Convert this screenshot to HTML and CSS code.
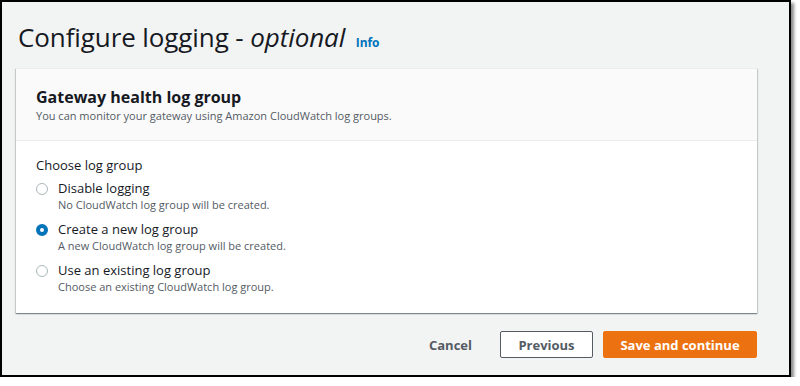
FILE: index.html
```html
<!DOCTYPE html>
<html lang="en">
<head>
    <meta charset="UTF-8">
    <title>Configure logging</title>
    <link rel="stylesheet" href="styles.css">
</head>
<body>
    <div class="frame">
        <h1 class="page-title">Configure logging - <i>optional</i> <a class="info" href="#">Info</a></h1>

        <div class="card">
            <div class="card-header">
                <h2>Gateway health log group</h2>
                <p>You can monitor your gateway using Amazon CloudWatch log groups.</p>
            </div>
            <div class="card-body">
                <div class="group-label">Choose log group</div>
                <label class="radio">
                    <span class="dot"></span>
                    <span class="text">
                        <span class="title">Disable logging</span>
                        <span class="desc">No CloudWatch log group will be created.</span>
                    </span>
                </label>
                <label class="radio checked">
                    <span class="dot"></span>
                    <span class="text">
                        <span class="title">Create a new log group</span>
                        <span class="desc">A new CloudWatch log group will be created.</span>
                    </span>
                </label>
                <label class="radio">
                    <span class="dot"></span>
                    <span class="text">
                        <span class="title">Use an existing log group</span>
                        <span class="desc">Choose an existing CloudWatch log group.</span>
                    </span>
                </label>
            </div>
        </div>

        <div class="actions">
            <button class="btn-link">Cancel</button>
            <button class="btn-normal">Previous</button>
            <button class="btn-primary">Save and continue</button>
        </div>
    </div>
</body>
</html>
```

FILE: styles.css
```css
body {
    margin: 0;
    font-family: "Open Sans", "Noto Sans", sans-serif;
    background-color: #ffffff;
    color: #16191f;
}

.frame {
    box-sizing: border-box;
    width: 791px;
    height: 377px;
    border: 2px solid #000000;
    background-color: #f2f3f3;
    box-shadow: 3px 3px 3px rgba(0, 0, 0, 0.45);
    padding: 0 32px 0 14px;
}

.page-title {
    margin: 0;
    padding-top: 18px;
    height: 66px;
    box-sizing: border-box;
    font-size: 26px;
    font-weight: 400;
    line-height: 34px;
    letter-spacing: -0.1px;
    padding-left: 2px;
}

.info {
    font-size: 12px;
    font-weight: 700;
    color: #0073bb;
    text-decoration: none;
    margin-left: 4px;
}

.card {
    background-color: #ffffff;
    box-shadow: 0 1px 1px rgba(0, 28, 36, 0.3), 1px 1px 1px rgba(0, 28, 36, 0.15), -1px 1px 1px rgba(0, 28, 36, 0.15);
    border-top: 1px solid #eaeded;
}

.card-header {
    background-color: #fafafa;
    border-bottom: 1px solid #eaeded;
    padding: 17px 20px 14px;
    height: 72px;
    box-sizing: border-box;
}

.card-header h2 {
    margin: 0;
    font-size: 16px;
    font-weight: 700;
    line-height: 22px;
}

.card-header p {
    margin: 0;
    font-size: 11px;
    line-height: 16px;
    color: #545b64;
}

.card-body {
    padding: 15px 20px 11px;
}

.group-label {
    font-size: 13px;
    line-height: 18px;
    margin-bottom: 5px;
}

.radio {
    display: flex;
    gap: 10px;
    margin-bottom: 8px;
}

.dot {
    box-sizing: border-box;
    width: 12px;
    height: 12px;
    margin-top: 4px;
    border: 1px solid #aab7b8;
    border-radius: 50%;
    background-color: #ffffff;
}

.radio.checked .dot {
    border: 4px solid #0073bb;
}

.text {
    display: flex;
    flex-direction: column;
}

.title {
    font-size: 13px;
    line-height: 18px;
}

.desc {
    font-size: 11px;
    line-height: 15px;
    color: #545b64;
}

.actions {
    display: flex;
    justify-content: flex-end;
    align-items: center;
    gap: 10px;
    margin-top: 18px;
}

.actions button {
    font-family: inherit;
    font-size: 13px;
    font-weight: 700;
    height: 27px;
    border-radius: 2px;
    cursor: pointer;
}

.btn-link {
    background: none;
    border: none;
    color: #545b64;
    padding: 0 18px 0 20px;
}

.btn-normal {
    width: 93px;
    background-color: #ffffff;
    border: 1px solid #545b64;
    color: #545b64;
}

.btn-primary {
    width: 154px;
    background-color: #ec7211;
    border: 1px solid #ec7211;
    color: #ffffff;
}
```
